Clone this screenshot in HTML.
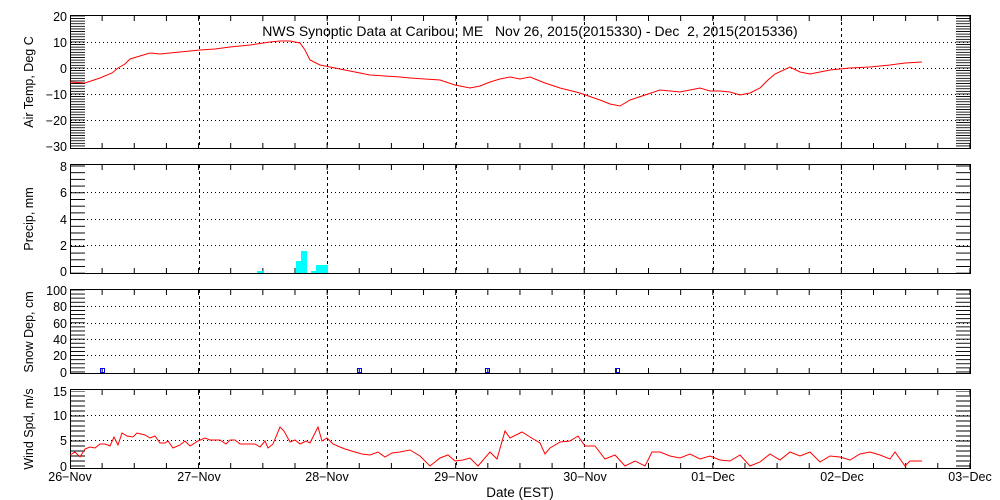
<!DOCTYPE html>
<html><head><meta charset="utf-8"><style>
html,body{margin:0;padding:0;background:#fff;width:1000px;height:500px;overflow:hidden}
svg text{font-family:"Liberation Sans",sans-serif;font-size:12.5px;fill:#000}
</style></head><body>
<svg width="1000" height="500" viewBox="0 0 1000 500" xmlns="http://www.w3.org/2000/svg" shape-rendering="crispEdges">
<defs>
<pattern id="t1" patternUnits="userSpaceOnUse" x="0" y="15.5" width="14" height="2.6"><rect x="0" y="0" width="14" height="1" fill="#000"/></pattern>
<pattern id="t2" patternUnits="userSpaceOnUse" x="0" y="165.5" width="14" height="6.7"><rect x="0" y="0" width="14" height="1" fill="#000"/></pattern>
<pattern id="t3" patternUnits="userSpaceOnUse" x="0" y="289.5" width="14" height="4.1"><rect x="0" y="0" width="14" height="1" fill="#000"/></pattern>
<pattern id="t4" patternUnits="userSpaceOnUse" x="0" y="390.5" width="14" height="5"><rect x="0" y="0" width="14" height="1" fill="#000"/></pattern>
<pattern id="vx" patternUnits="userSpaceOnUse" x="69.5" y="0" width="32.14" height="5"><rect x="0" y="0" width="1" height="5" fill="#000"/></pattern>
</defs>
<g fill="none" stroke="#000" stroke-width="1">
<rect x="70.5" y="15.5" width="900" height="133"/>
<rect x="70.5" y="164.5" width="900" height="109"/>
<rect x="70.5" y="289.5" width="900" height="84"/>
<rect x="70.5" y="389.5" width="900" height="79"/>
</g>
<rect x="71" y="16" width="14" height="131" fill="url(#t1)"/><rect x="956" y="16" width="14" height="131" fill="url(#t1)"/>
<rect x="71" y="165" width="14" height="108" fill="url(#t2)"/><rect x="956" y="165" width="14" height="108" fill="url(#t2)"/>
<rect x="71" y="290" width="14" height="83" fill="url(#t3)"/><rect x="956" y="290" width="14" height="83" fill="url(#t3)"/>
<rect x="71" y="391" width="14" height="77" fill="url(#t4)"/><rect x="956" y="391" width="14" height="77" fill="url(#t4)"/>
<g>
<rect x="70" y="16" width="900" height="5" fill="url(#vx)"/><rect x="70" y="143" width="900" height="5" fill="url(#vx)"/>
<rect x="70" y="165" width="900" height="5" fill="url(#vx)"/><rect x="70" y="268" width="900" height="5" fill="url(#vx)"/>
<rect x="70" y="290" width="900" height="5" fill="url(#vx)"/><rect x="70" y="368" width="900" height="5" fill="url(#vx)"/>
<rect x="70" y="390" width="900" height="5" fill="url(#vx)"/><rect x="70" y="463" width="900" height="5" fill="url(#vx)"/>
</g>
<g stroke="#000" stroke-width="1" stroke-dasharray="1,3">
<path d="M71 42.5H970M71 68.5H970M71 94.5H970M71 120.5H970"/>
<path d="M71 245.5H970M71 219.5H970M71 192.5H970"/>
<path d="M71 355.5H970M71 339.5H970M71 323.5H970M71 306.5H970"/>
<path d="M71 440.5H970M71 415.5H970"/>
</g>
<g stroke="#000" stroke-width="1" stroke-dasharray="3,3">
<path d="M199.5 16V148M327.5 16V148M456.5 16V148M584.5 16V148M713.5 16V148M841.5 16V148"/>
<path d="M199.5 165V273M327.5 165V273M456.5 165V273M584.5 165V273M713.5 165V273M841.5 165V273"/>
<path d="M199.5 290V373M327.5 290V373M456.5 290V373M584.5 290V373M713.5 290V373M841.5 290V373"/>
<path d="M199.5 390V468M327.5 390V468M456.5 390V468M584.5 390V468M713.5 390V468M841.5 390V468"/>
</g>
<polyline fill="none" stroke="#f00" stroke-width="1" shape-rendering="auto" points="70,82 85,83 100,78 112,73 118,68 125,64 130,59 140,56 150,53 160,54 170,53 180,52 190,51 200,50 215,49 230,47 250,45 270,42 280,41 290,41 300,43 305,50 310,60 320,65 330,67 345,70 370,75 385,76 400,77 410,78 425,79 440,80 455,85 470,88 480,86 490,82 500,79 510,77 520,79 530,77 545,83 560,88 580,93 600,100 610,104 620,106 630,100 645,95 660,90 680,92 690,90 700,88 710,91 720,91 730,92 740,95 750,93 760,88 768,80 775,74 790,67 800,72 810,74 820,72 830,70 840,69 850,68 870,67 890,65 905,63 922,62"/>
<g fill="#0ff">
<rect x="257" y="271" width="6" height="2"/>
<rect x="296" y="261" width="6" height="12"/>
<rect x="301" y="251" width="6" height="22"/>
<rect x="311" y="271" width="6" height="2"/>
<rect x="316" y="265" width="12" height="8"/>
</g>
<g fill="none" stroke="#00f">
<rect x="100.5" y="368.5" width="4" height="4"/>
<rect x="357.5" y="368.5" width="4" height="4"/>
<rect x="485.5" y="368.5" width="4" height="4"/>
<rect x="615.5" y="368.5" width="4" height="4"/>
</g>
<polyline fill="none" stroke="#f00" stroke-width="1" shape-rendering="auto" points="70,455 75,452 80,457 85,449 90,447 95,448 100,444 105,444 110,446 114,437 118,445 122,433 127,436 133,437 137,433 145,435 150,438 155,436 160,443 165,443 168,441 173,448 180,445 185,441 190,446 198,441 205,438 210,440 220,440 226,444 230,440 235,440 240,444 250,444 255,444 260,447 265,441 268,448 273,444 280,427 284,431 290,442 295,440 300,444 306,441 310,443 318,427 322,441 327,438 333,444 340,447 345,449 355,452 362,454 370,455 378,452 385,457 392,453 400,452 410,450 420,456 430,466 440,458 448,455 455,461 463,460 470,458 478,466 490,452 497,459 505,431 510,438 522,432 530,437 540,443 545,454 550,448 560,442 570,441 578,436 585,446 595,446 605,459 615,455 625,466 635,461 645,466 652,452 660,452 670,456 680,458 690,454 700,459 710,456 720,460 730,461 740,455 750,466 760,462 770,454 780,460 790,452 800,456 810,452 820,462 830,456 840,457 850,460 860,454 870,452 880,455 890,459 895,452 905,466 910,461 922,461"/>
<text x="530" y="36" text-anchor="middle" style="font-size:14px" xml:space="preserve">NWS Synoptic Data at Caribou, ME   Nov 26, 2015(2015330) - Dec  2, 2015(2015336)</text>
<g text-anchor="end">
<text x="67" y="21">20</text><text x="67" y="47">10</text><text x="67" y="73">0</text><text x="67" y="99">−10</text><text x="67" y="125">−20</text><text x="67" y="151">−30</text>
<text x="67" y="171">8</text><text x="67" y="197">6</text><text x="67" y="224">4</text><text x="67" y="250">2</text><text x="67" y="276">0</text>
<text x="67" y="295">100</text><text x="67" y="311">80</text><text x="67" y="328">60</text><text x="67" y="344">40</text><text x="67" y="360">20</text><text x="67" y="377">0</text>
<text x="67" y="396">15</text><text x="67" y="420">10</text><text x="67" y="445">5</text><text x="67" y="471">0</text>
</g>
<g text-anchor="middle" style="font-size:13.5px">
<text transform="translate(33,82) rotate(-90)">Air Temp, Deg C</text>
<text transform="translate(33,219) rotate(-90)">Precip, mm</text>
<text transform="translate(33,332) rotate(-90)">Snow Dep, cm</text>
<text transform="translate(33,429) rotate(-90)">Wind Spd, m/s</text>
</g>
<g text-anchor="middle">
<text x="70" y="481">26−Nov</text><text x="199" y="481">27−Nov</text><text x="327" y="481">28−Nov</text><text x="456" y="481">29−Nov</text><text x="585" y="481">30−Nov</text><text x="713" y="481">01−Dec</text><text x="842" y="481">02−Dec</text><text x="970" y="481">03−Dec</text>
<text x="520" y="497" style="font-size:13.5px">Date (EST)</text>
</g>
</svg>
</body></html>
